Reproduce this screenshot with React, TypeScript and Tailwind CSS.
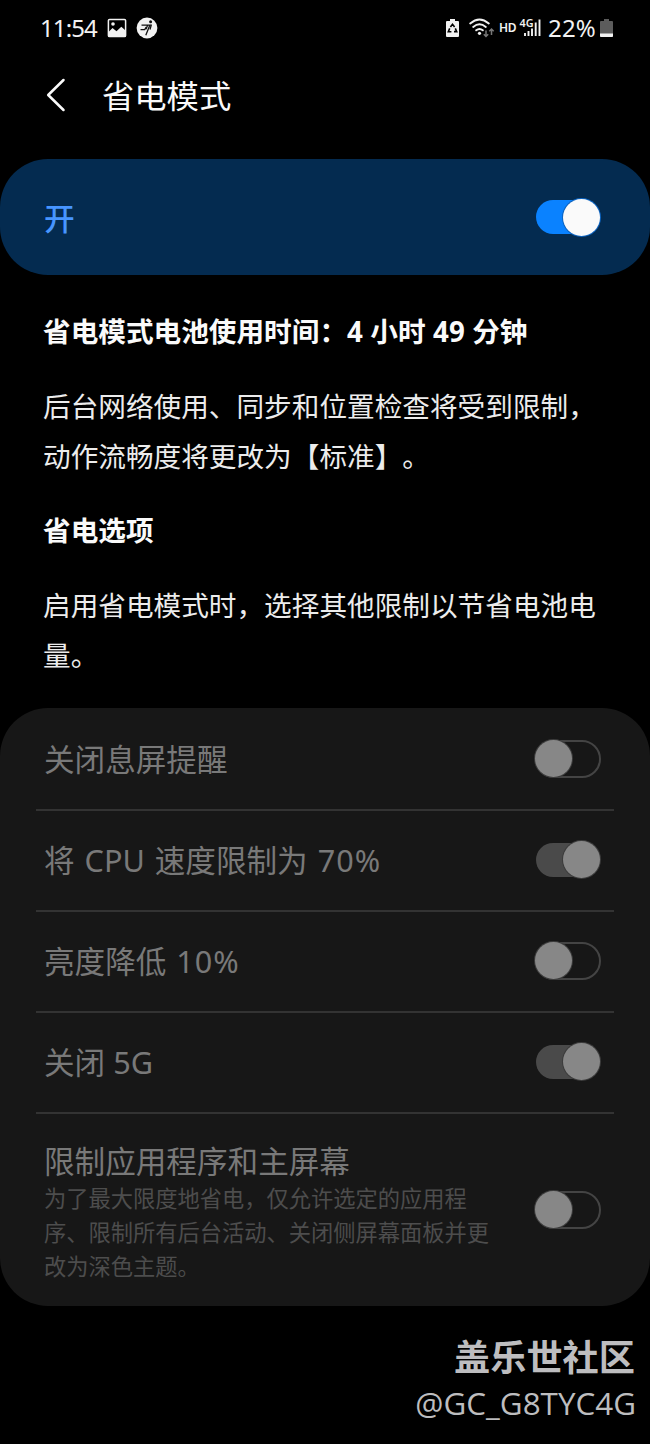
import clsx from 'clsx'

type ToggleProps = {
  on: boolean
  active?: boolean
}

const Toggle = ({ on, active = false }: ToggleProps) => {
  return (
    <span
      role="switch"
      aria-checked={on}
      className={clsx(
        'flex h-[38px] w-[66px] shrink-0 items-center rounded-full',
        on ? 'justify-end pr-px' : 'justify-start border-2 border-[#444]',
      )}
    >
      {on && (
        <span
          className={clsx(
            '-mr-[35px] h-[34px] w-[62px] shrink-0 rounded-full',
            active ? 'bg-[#0a82ff]' : 'bg-[#4a4a4a]',
          )}
        />
      )}
      <span
        className={clsx(
          'relative size-[37px] shrink-0 rounded-full',
          active
            ? 'bg-[#fafafa] ring-1 ring-[#0c63c0]'
            : 'bg-[#878787] ring-1 ring-[#3c3c3c]',
          !on && '-ml-[2px]',
        )}
      />
    </span>
  )
}

const StatusBar = () => {
  return (
    <div className="flex h-[55px] items-center justify-between pr-[37px] pl-10 text-[#f2f2f2]">
      <div className="flex items-center">
        <span className="w-[67px] text-[24px] tracking-[-0.9px]">11:54</span>
        <svg width="20" height="20" viewBox="0 0 20 20" fill="none">
          <rect x="1.4" y="1.4" width="17.2" height="17.2" rx="1.2" stroke="currentColor" strokeWidth="1.5" />
          <circle cx="6" cy="6" r="1.8" fill="currentColor" />
          <path d="M2 13.5 5.5 10l4 3.2 4.8-4.4L18 12v6H2Z" fill="currentColor" />
        </svg>
        <svg width="22" height="22" viewBox="0 0 22 22" className="ml-[9px]" fill="none">
          <circle cx="11" cy="11" r="10.4" fill="currentColor" />
          <circle cx="14.6" cy="4.8" r="1.5" fill="#111" />
          <path d="M5.5 8.2h8.3l-1.6 4-2.4 6M10 12.3l1.6-4M4.5 12.6h4.2l1.5-2.4M15.4 7.5l-1.4 5" stroke="#111" strokeWidth="1.3" />
        </svg>
      </div>

      <div className="flex items-center">
        <svg width="13" height="20" viewBox="0 0 13 20" className="mr-[10px]">
          <path d="M4 1h5v2h3q1 0 1 1v14q0 1-1 1H1q-1 0-1-1V4q0-1 1-1h3Z" fill="currentColor" />
          <path d="m4.4 9 2.1-2.7L8.6 9M9.3 10.4l1.4 3.2H8M5.4 13.8H2.3l1.4-3.4" stroke="#000" strokeWidth="1.6" fill="none" />
        </svg>
        <svg width="26" height="20" viewBox="0 0 26 20" className="mr-[4px]" fill="none">
          <path d="M1.2 5.5q9.3-8 18.6 0M4.2 9q6.3-5.3 12.6 0M7.2 12.3q3.3-2.6 6.6 0" stroke="currentColor" strokeWidth="1.9" strokeLinecap="round" />
          <circle cx="10.5" cy="15.3" r="1.6" fill="currentColor" />
          <path d="M17 12.5v6m-2.2-2.2 2.2 2.2 2.2-2.2M22.5 17v-6m-2.2 2.2 2.2-2.2 2.2 2.2" stroke="#777" strokeWidth="1.5" />
        </svg>
        <span className="w-[20px] text-[12px] font-semibold tracking-tight">HD</span>
        <svg width="23" height="32" viewBox="0 -5 23 32" className="mr-[6px]">
          <text x="0.5" y="9.5" fontSize="11.5" fontWeight="600" fill="currentColor" textLength="14" lengthAdjust="spacingAndGlyphs">
            4G
          </text>
          <path d="M6 19v-3M9.5 19v-5M13 19v-7.5M16.7 19V5.5M20.5 19V2.5" stroke="currentColor" strokeWidth="1.9" />
        </svg>
        <span className="w-[50px] text-[24px] tracking-[0.2px]">22%</span>
        <svg width="13" height="20" viewBox="0 0 13 20" className="ml-[2px]">
          <path d="M4 1h5v2h3q1 0 1 1v14q0 1-1 1H1q-1 0-1-1V4q0-1 1-1h3Z" fill="#5c5c5c" />
          <path d="M0 15.5h13V18q0 1-1 1H1q-1 0-1-1Z" fill="currentColor" />
        </svg>
      </div>
    </div>
  )
}

const App = () => {
  const options = [
    { title: '关闭息屏提醒', percent: '', on: false },
    { title: '将 CPU 速度限制为 ', percent: '70%', on: true },
    { title: '亮度降低 ', percent: '10%', on: false },
    { title: '关闭 5G', percent: '', on: true },
  ]

  return (
    <main
      lang="zh-CN"
      className="h-[1444px] w-[650px] overflow-hidden bg-black font-['Noto_Sans','Noto_Sans_CJK_SC',sans-serif] [text-spacing-trim:space-all]"
    >
      <StatusBar />

      <header className="flex h-20 items-center pl-[46px] text-[#fafafa]">
        <svg width="20" height="34" viewBox="0 0 20 34" fill="none">
          <path d="M17.5 2 2.2 17l15.3 15" stroke="currentColor" strokeWidth="2.5" strokeLinecap="round" strokeLinejoin="round" />
        </svg>
        <h1 className="ml-9 text-[32.3px] leading-10">省电模式</h1>
      </header>

      <section className="mt-6 flex h-[116px] items-center justify-between rounded-[48px] bg-[#042b50] pr-[49px] pl-11">
        <span className="pt-0.5 text-[30.7px] font-medium text-[#4795ff]">开</span>
        <Toggle on active />
      </section>

      <section className="px-[43px] pt-9 text-[27.65px] text-[#ececec]">
        <h2 className="leading-10 font-bold text-[#fafafa] [word-spacing:0.3px]">省电模式电池使用时间：4 小时 49 分钟</h2>
        <p className="mt-[31px] leading-[49.5px] whitespace-nowrap">
          后台网络使用、同步和位置检查将受到限制，
          <br />
          动作流畅度将更改为【标准】。
        </p>
        <h2 className="mt-[29px] leading-10 font-bold text-[#fafafa]">省电选项</h2>
        <p className="mt-[31px] leading-[49.5px] whitespace-nowrap">
          启用省电模式时，选择其他限制以节省电池电
          <br />
          量。
        </p>
      </section>

      <section className="mt-[28px] h-[598px] rounded-[48px] bg-[#171717] px-9 text-[#797979]">
        {options.map((option) => (
          <div
            key={option.title}
            className="flex h-[101px] items-center justify-between border-b-2 border-[#333] pr-[13px] pb-0.5 pl-2 first:h-[103px] first:pb-0"
          >
            <span className="text-[30.6px] leading-10 whitespace-pre">
              {option.percent ? (
                <>
                  <span className="[word-spacing:2px]">{option.title}</span>
                  <span className="tracking-[1px]">{option.percent}</span>
                </>
              ) : (
                option.title
              )}
            </span>
            <Toggle on={option.on} />
          </div>
        ))}
        <div className="flex h-[191px] items-center justify-between pr-[13px] pl-2">
          <div className="pt-1.5">
            <h3 className="text-[30.6px] leading-10">限制应用程序和主屏幕</h3>
            <p className="mt-px text-[22.25px] leading-[34px] whitespace-nowrap text-[#4d4d4d]">
              为了最大限度地省电，仅允许选定的应用程
              <br />
              序、限制所有后台活动、关闭侧屏幕面板并更
              <br />
              改为深色主题。
            </p>
          </div>
          <Toggle on={false} />
        </div>
      </section>

      <footer className="mt-[26px] flex flex-col items-end pr-[14px] text-[#bdbdbf]">
        <p className="pr-px text-[36.2px] leading-[50px] font-bold">盖乐世社区</p>
        <p className="font-['Open_Sans',sans-serif] text-[31.4px] leading-[42px]">@GC_G8TYC4G</p>
      </footer>
    </main>
  )
}

export default App
